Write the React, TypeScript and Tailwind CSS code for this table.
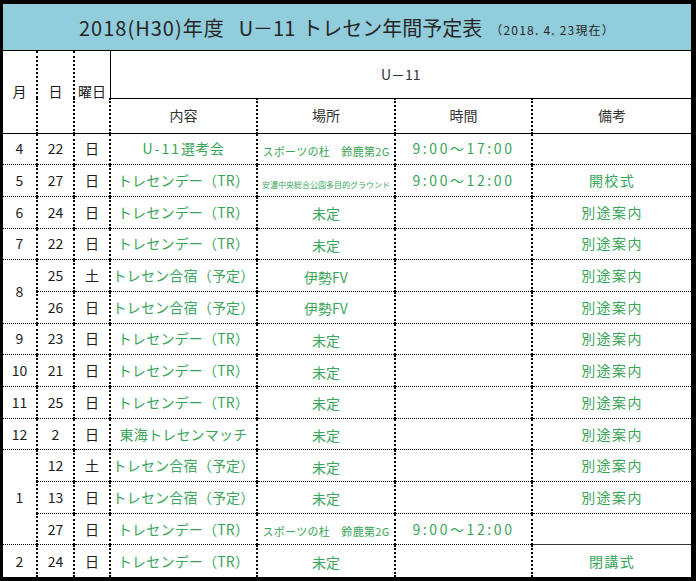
import React from "react";

type Row = {
  m?: string;
  mspan?: number;
  d: string;
  w: string;
  c: string;
  p: string;
  ps?: "sm" | "xs";
  t: string;
  n: string;
  last?: boolean;
  monthEnd?: boolean;
};

const rows: Row[] = [
  { m: "4", d: "22", w: "日", c: "U-11選考会", p: "スポーツの杜　鈴鹿第2G", ps: "sm", t: "9:00～17:00", n: "" },
  { m: "5", d: "27", w: "日", c: "トレセンデー（TR）", p: "安濃中央総合公園多目的グラウンド", ps: "xs", t: "9:00～12:00", n: "開校式" },
  { m: "6", d: "24", w: "日", c: "トレセンデー（TR）", p: "未定", t: "", n: "別途案内" },
  { m: "7", d: "22", w: "日", c: "トレセンデー（TR）", p: "未定", t: "", n: "別途案内" },
  { m: "8", mspan: 2, d: "25", w: "土", c: "トレセン合宿（予定）", p: "伊勢FV", t: "", n: "別途案内" },
  { d: "26", w: "日", c: "トレセン合宿（予定）", p: "伊勢FV", t: "", n: "別途案内" },
  { m: "9", d: "23", w: "日", c: "トレセンデー（TR）", p: "未定", t: "", n: "別途案内" },
  { m: "10", d: "21", w: "日", c: "トレセンデー（TR）", p: "未定", t: "", n: "別途案内" },
  { m: "11", d: "25", w: "日", c: "トレセンデー（TR）", p: "未定", t: "", n: "別途案内" },
  { m: "12", d: "2", w: "日", c: "東海トレセンマッチ", p: "未定", t: "", n: "別途案内" },
  { m: "1", mspan: 3, d: "12", w: "土", c: "トレセン合宿（予定）", p: "未定", t: "", n: "別途案内" },
  { d: "13", w: "日", c: "トレセン合宿（予定）", p: "未定", t: "", n: "別途案内" },
  { d: "27", w: "日", c: "トレセンデー（TR）", p: "スポーツの杜　鈴鹿第2G", ps: "sm", t: "9:00～12:00", n: "", monthEnd: true },
  { m: "2", d: "24", w: "日", c: "トレセンデー（TR）", p: "未定", t: "", n: "閉講式", last: true },
];

const dark = "text-[#1c1c1c] text-[14px]";
const green = "text-[#3aa65a] text-[14px]";
const vcell = "border-black border-r-2 border-b [border-style:none_dotted_dotted_none] text-center p-0 align-middle whitespace-nowrap overflow-hidden";
const lastcell = "border-black border-b [border-style:none_none_dotted_none] text-center p-0 align-middle whitespace-nowrap overflow-hidden";
const lastcellSolid = "border-[#333] border-b [border-style:none_none_solid_none] text-center p-0 align-middle whitespace-nowrap overflow-hidden";
const vcellNoBottom = "border-black border-r-2 [border-style:none_dotted_none_none] text-center p-0 align-middle whitespace-nowrap overflow-hidden";
const lastNoBottom = "text-center p-0 align-middle whitespace-nowrap overflow-hidden";

function Content({ text }: { text: string }) {
  if (text === "U-11選考会") {
    return (
      <span>
        <span className="tracking-[2px]">U-11</span>
        <span className="tracking-[0.5px]">選考会</span>
      </span>
    );
  }
  return <span className="tracking-[0.2px]">{text}</span>;
}

export default function App() {
  return (
    <div
      className="w-[696px] h-[581px] bg-black pt-[4px] pl-[3px] overflow-hidden"
      style={{ fontFamily: '"Noto Sans CJK JP", "Noto Sans", sans-serif' }}
    >
      <div className="w-[688px] h-[573px] bg-white flex flex-col">
        <div className="h-[47px] bg-[#92cddc] border-b border-black flex items-center justify-center pt-[1px] text-[#262626]">
          <span className="text-[20px] tracking-[1px]">2018(H30)年度</span>
          <span className="text-[20px] ml-[14px]">U－11</span>
          <span className="text-[20px] ml-[7px]">トレセン年間予定表</span>
          <span className="text-[12px] tracking-[1.2px] ml-[8px] mt-[4px]">（2018. 4. 23現在）</span>
        </div>
        <table className="border-collapse table-fixed w-[688px]">
          <colgroup>
            <col className="w-[34px]" />
            <col className="w-[37px]" />
            <col className="w-[36px]" />
            <col className="w-[147px]" />
            <col className="w-[138px]" />
            <col className="w-[137px]" />
            <col className="w-[159px]" />
          </colgroup>
          <tbody>
            <tr className="h-[47px]">
              <td rowSpan={2} className={`border-black border-r-2 border-b [border-style:none_dotted_solid_none] text-center p-0 align-middle ${dark}`}>月</td>
              <td rowSpan={2} className={`border-black border-r-2 border-b [border-style:none_dotted_solid_none] text-center p-0 align-middle ${dark}`}>日</td>
              <td rowSpan={2} className={`border-black border-b [border-style:none_none_solid_none] text-center p-0 align-middle ${dark}`}>曜日</td>
              <td colSpan={4} className="border-black border-l border-b [border-style:none_none_solid_solid] text-center p-0 align-middle text-[14px] text-[#333]">U－11</td>
            </tr>
            <tr className="h-[35px]">
              <td className="border-black border-l-2 border-r-2 border-b [border-style:none_dotted_solid_dotted] text-center p-0 align-middle text-[14px] text-[#333]">内容</td>
              <td className="border-black border-r-2 border-b [border-style:none_dotted_solid_none] text-center p-0 align-middle text-[14px] text-[#333]">場所</td>
              <td className="border-black border-r-2 border-b [border-style:none_dotted_solid_none] text-center p-0 align-middle text-[14px] text-[#333]">時間</td>
              <td className="border-black border-b [border-style:none_none_solid_none] text-center p-0 align-middle text-[14px] text-[#333]">備考</td>
            </tr>
            {rows.map((r, i) => {
              const vc = r.last ? vcellNoBottom : vcell;
              const lc = r.last ? lastNoBottom : r.monthEnd ? lastcellSolid : lastcell;
              return (
                <tr key={i} className="h-[31.7px]">
                  {r.m !== undefined && (
                    <td rowSpan={r.mspan ?? 1} className={`${vc} ${dark}`}>{r.m}</td>
                  )}
                  <td className={`${vc} ${dark}`}>{r.d}</td>
                  <td className={`${vc} ${dark}`}>{r.w}</td>
                  <td className={`${vc} ${green}`}>
                    <Content text={r.c} />
                  </td>
                  <td className={`${vc} text-[#3aa65a]`}>
                    {r.ps === "sm" ? (
                      <span className="text-[11px] tracking-[0.3px]">{r.p}</span>
                    ) : r.ps === "xs" ? (
                      <span className="text-[8px]">{r.p}</span>
                    ) : (
                      <span className="text-[14px]">{r.p}</span>
                    )}
                  </td>
                  <td className={`${vc} ${green} tracking-[2.6px]`}>{r.t}</td>
                  <td className={`${lc} ${green} tracking-[1.4px]`}>{r.n}</td>
                </tr>
              );
            })}
          </tbody>
        </table>
      </div>
    </div>
  );
}
